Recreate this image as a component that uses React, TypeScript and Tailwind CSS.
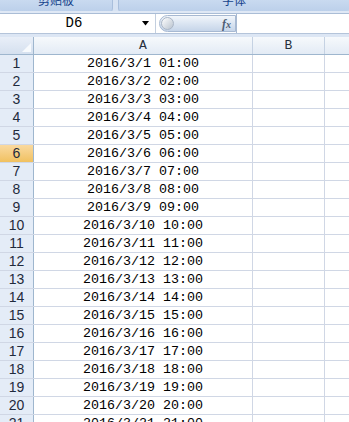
const rows = Array.from({ length: 21 }, (_, i) => {
  const n = i + 1;
  const hh = String(n).padStart(2, "0");
  return { n, text: `2016/3/${n} ${hh}:00` };
});

const App: React.FC = () => {
  return (
    <div className="w-[349px] h-[422px] overflow-hidden bg-white font-['Liberation_Sans',sans-serif] flex flex-col">
      {/* ribbon group labels, cut off at the top */}
      <div className="h-[11px] shrink-0 flex bg-[#c5d6ec] overflow-hidden">
        <div className="w-[113px] shrink-0 rounded-b-[3px] bg-gradient-to-b from-[#c9daf0] to-[#bcd0ea] border-r border-[#a9bfdc] flex justify-center">
          <span className="text-[12px] leading-[12px] -mt-[6px] text-[#15428b] font-['Noto_Sans_CJK_SC',sans-serif]">剪贴板</span>
        </div>
        <div className="w-[5px] shrink-0 bg-[#d7e3f3]" />
        <div className="flex-1 rounded-b-[3px] bg-gradient-to-b from-[#c9daf0] to-[#bcd0ea] border-l border-[#a9bfdc] flex justify-center">
          <span className="text-[12px] leading-[12px] -mt-[6px] text-[#15428b] font-['Noto_Sans_CJK_SC',sans-serif]">字体</span>
        </div>
      </div>
      <div className="h-[3px] shrink-0 bg-[#dfe8f5] border-b border-[#aabdd6]" />

      {/* formula bar */}
      <div className="h-[20px] shrink-0 flex bg-white border-b border-[#b4c4da]">
        <div className="w-[156px] shrink-0 flex items-center bg-white border-r border-[#c3cfdf]">
          <span className="flex-1 text-center font-['Liberation_Mono',monospace] text-[14px] text-black pl-[6px]">D6</span>
          <svg width="8" height="5" viewBox="0 0 8 5" className="mr-[5px]">
            <path d="M0 0 H7 L3.5 4.5 Z" fill="#000" />
          </svg>
        </div>
        <div className="w-[80px] shrink-0 flex items-center py-[1px] pl-[3px] bg-white">
          <div className="h-full flex-1 flex items-center rounded-l-full bg-gradient-to-b from-[#f2f6fb] via-[#dbe5f2] to-[#c6d5e9] border border-[#a7b9d2]">
            <div className="w-[13px] h-[13px] ml-[1px] rounded-full bg-gradient-to-br from-[#ffffff] to-[#b9c3cf] border border-[#aab6c6]" />
            <span className="ml-auto mr-[4px] font-['Liberation_Serif',serif] italic font-bold text-[12px] text-[#4d5d74]">
              f<span className="text-[10px]">x</span>
            </span>
          </div>
        </div>
        <div className="flex-1 bg-white border-l border-[#a7b9d2]" />
      </div>
      <div className="h-[3px] shrink-0 bg-[#dce6f4]" />

      {/* column headers */}
      <div className="h-[18px] shrink-0 flex bg-gradient-to-b from-[#f6f9fc] to-[#e3ebf5] border-b border-[#9eb6ce]">
        <div className="w-[34px] shrink-0 border-r border-[#9eb6ce] bg-gradient-to-b from-[#e9eff8] to-[#d5e0ef] flex items-end justify-end p-[2px]">
          <svg width="9" height="9" viewBox="0 0 9 9">
            <path d="M9 0 V9 H0 Z" fill="#f7fafd" />
          </svg>
        </div>
        <div className="w-[219px] shrink-0 border-r border-[#c5d2e3] text-center font-['Liberation_Mono',monospace] text-[13px] leading-[17px] text-[#27303c]">A</div>
        <div className="w-[72px] shrink-0 border-r border-[#c5d2e3] text-center font-['Liberation_Mono',monospace] text-[13px] leading-[17px] text-[#27303c]">B</div>
        <div className="flex-1" />
      </div>

      {/* rows */}
      <div className="flex flex-col">
        {rows.map((r) => (
          <div key={r.n} className="h-[18px] shrink-0 flex border-b border-[#d0d7e5]">
            <div
              className={
                r.n === 6
                  ? "w-[34px] shrink-0 bg-gradient-to-b from-[#f9d99f] to-[#f1c15f] border-r border-[#9eb6ce] text-center text-[14px] leading-[17px] text-[#1f2a3c]"
                  : "w-[34px] shrink-0 bg-[#e4ecf7] border-r border-[#9eb6ce] text-center text-[14px] leading-[17px] text-[#1f2a3c]"
              }
            >
              {r.n}
            </div>
            <div className="w-[219px] shrink-0 border-r border-[#d0d7e5] text-center font-['Liberation_Mono',monospace] text-[13.33px] leading-[17px] text-black whitespace-pre">
              {r.text}
            </div>
            <div className="w-[72px] shrink-0 border-r border-[#d0d7e5]" />
            <div className="flex-1" />
          </div>
        ))}
      </div>
    </div>
  );
};

export default App;
